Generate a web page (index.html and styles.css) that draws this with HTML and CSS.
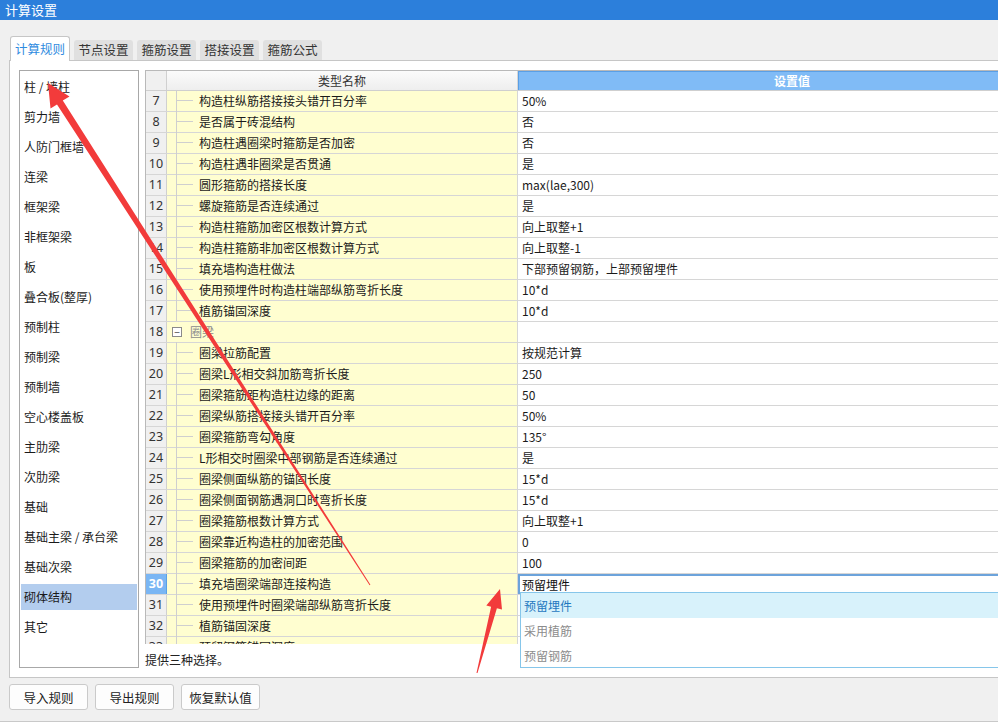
FILE: index.html
```html
<!DOCTYPE html>
<html lang="zh-CN">
<head>
<meta charset="utf-8">
<title>计算设置</title>
<link rel="stylesheet" href="styles.css">
</head>
<body>
<div class="window">
  <div class="titlebar">计算设置</div>
  <div class="main">
    <div class="tabs">
      <div class="tab active">计算规则</div>
      <div class="tab">节点设置</div>
      <div class="tab">箍筋设置</div>
      <div class="tab">搭接设置</div>
      <div class="tab">箍筋公式</div>
    </div>
    <div class="panel">
      <ul class="cat-list">
        <li>柱 / 墙柱</li>
        <li>剪力墙</li>
        <li>人防门框墙</li>
        <li>连梁</li>
        <li>框架梁</li>
        <li>非框架梁</li>
        <li>板</li>
        <li>叠合板(整厚)</li>
        <li>预制柱</li>
        <li>预制梁</li>
        <li>预制墙</li>
        <li>空心楼盖板</li>
        <li>主肋梁</li>
        <li>次肋梁</li>
        <li>基础</li>
        <li>基础主梁 / 承台梁</li>
        <li>基础次梁</li>
        <li class="selected">砌体结构</li>
        <li>其它</li>
      </ul>
      <div class="right">
        <div class="grid">
          <div class="row head">
            <div class="num"></div>
            <div class="name">类型名称</div>
            <div class="val">设置值</div>
          </div>
          <div class="row"><div class="num">7</div><div class="name"><span class="branch"></span>构造柱纵筋搭接接头错开百分率</div><div class="val">50%</div></div>
          <div class="row"><div class="num">8</div><div class="name"><span class="branch"></span>是否属于砖混结构</div><div class="val">否</div></div>
          <div class="row"><div class="num">9</div><div class="name"><span class="branch"></span>构造柱遇圈梁时箍筋是否加密</div><div class="val">否</div></div>
          <div class="row"><div class="num">10</div><div class="name"><span class="branch"></span>构造柱遇非圈梁是否贯通</div><div class="val">是</div></div>
          <div class="row"><div class="num">11</div><div class="name"><span class="branch"></span>圆形箍筋的搭接长度</div><div class="val">max(lae,300)</div></div>
          <div class="row"><div class="num">12</div><div class="name"><span class="branch"></span>螺旋箍筋是否连续通过</div><div class="val">是</div></div>
          <div class="row"><div class="num">13</div><div class="name"><span class="branch"></span>构造柱箍筋加密区根数计算方式</div><div class="val">向上取整+1</div></div>
          <div class="row"><div class="num">14</div><div class="name"><span class="branch"></span>构造柱箍筋非加密区根数计算方式</div><div class="val">向上取整-1</div></div>
          <div class="row"><div class="num">15</div><div class="name"><span class="branch"></span>填充墙构造柱做法</div><div class="val">下部预留钢筋，上部预留埋件</div></div>
          <div class="row"><div class="num">16</div><div class="name"><span class="branch"></span>使用预埋件时构造柱端部纵筋弯折长度</div><div class="val">10*d</div></div>
          <div class="row"><div class="num">17</div><div class="name"><span class="branch last"></span>植筋锚固深度</div><div class="val">10*d</div></div>
          <div class="row"><div class="num">18</div><div class="name group"><span class="toggle">−</span>圈梁</div><div class="val"></div></div>
          <div class="row"><div class="num">19</div><div class="name"><span class="branch"></span>圈梁拉筋配置</div><div class="val">按规范计算</div></div>
          <div class="row"><div class="num">20</div><div class="name"><span class="branch"></span>圈梁L形相交斜加筋弯折长度</div><div class="val">250</div></div>
          <div class="row"><div class="num">21</div><div class="name"><span class="branch"></span>圈梁箍筋距构造柱边缘的距离</div><div class="val">50</div></div>
          <div class="row"><div class="num">22</div><div class="name"><span class="branch"></span>圈梁纵筋搭接接头错开百分率</div><div class="val">50%</div></div>
          <div class="row"><div class="num">23</div><div class="name"><span class="branch"></span>圈梁箍筋弯勾角度</div><div class="val">135°</div></div>
          <div class="row"><div class="num">24</div><div class="name"><span class="branch"></span>L形相交时圈梁中部钢筋是否连续通过</div><div class="val">是</div></div>
          <div class="row"><div class="num">25</div><div class="name"><span class="branch"></span>圈梁侧面纵筋的锚固长度</div><div class="val">15*d</div></div>
          <div class="row"><div class="num">26</div><div class="name"><span class="branch"></span>圈梁侧面钢筋遇洞口时弯折长度</div><div class="val">15*d</div></div>
          <div class="row"><div class="num">27</div><div class="name"><span class="branch"></span>圈梁箍筋根数计算方式</div><div class="val">向上取整+1</div></div>
          <div class="row"><div class="num">28</div><div class="name"><span class="branch"></span>圈梁靠近构造柱的加密范围</div><div class="val">0</div></div>
          <div class="row"><div class="num">29</div><div class="name"><span class="branch"></span>圈梁箍筋的加密间距</div><div class="val">100</div></div>
          <div class="row current"><div class="num">30</div><div class="name"><span class="branch"></span>填充墙圈梁端部连接构造</div><div class="val editing">预留埋件</div></div>
          <div class="row"><div class="num">31</div><div class="name"><span class="branch"></span>使用预埋件时圈梁端部纵筋弯折长度</div><div class="val"></div></div>
          <div class="row"><div class="num">32</div><div class="name"><span class="branch"></span>植筋锚固深度</div><div class="val"></div></div>
          <div class="row"><div class="num">33</div><div class="name"><span class="branch"></span>预留钢筋锚固深度</div><div class="val"></div></div>
        </div>
        <div class="desc">提供三种选择。</div>
        <ul class="dropdown">
          <li class="hover">预留埋件</li>
          <li>采用植筋</li>
          <li>预留钢筋</li>
        </ul>
      </div>
    </div>
    <div class="buttons">
      <button class="btn">导入规则</button>
      <button class="btn">导出规则</button>
      <button class="btn">恢复默认值</button>
    </div>
  </div>
  <svg class="arrows" width="998" height="722" viewBox="0 0 998 722">
    <polygon points="48,83 69.5,96.5 62.8,100.6 370.4,584.7 369.6,585.3 57,104.4 50.5,108.5" fill="#f23b3b"/>
    <polygon points="500,589 502,609.4 496.9,608.2 477.5,673.1 476.5,672.9 491.1,606.7 486.3,605.4" fill="#f23b3b"/>
  </svg>
</div>
</body>
</html>
```
FILE: styles.css
```css
* { box-sizing: border-box; }
html, body { margin: 0; padding: 0; }
body {
  width: 998px;
  height: 722px;
  overflow: hidden;
  font-family: "Noto Sans CJK SC", "Noto Sans", sans-serif;
  font-size: 12px;
  color: #1a1a1a;
  background: #f0f0f0;
}
.window {
  position: relative;
  width: 998px;
  height: 722px;
  overflow: hidden;
}
.titlebar {
  height: 20px;
  line-height: 19px;
  padding-left: 5px;
  background: #2c7fdb;
  color: #ffffff;
  font-size: 13px;
}
.main {
  height: 702px;
  background: #f0f0f0;
  border-bottom: 1px solid #c9c9c9;
}
.tabs {
  display: flex;
  align-items: flex-end;
  gap: 4px;
  padding: 16px 0 0 10px;
  height: 40px;
  position: relative;
  z-index: 2;
}
.tab {
  height: 20px;
  line-height: 20px;
  width: 59px;
  flex: none;
  white-space: nowrap;
  text-align: center;
  background: #e0e0e0;
  color: #333333;
  border-radius: 3px 3px 0 0;
  font-size: 12.5px;
}
.tab.active {
  height: 25px;
  line-height: 24px;
  width: 60px;
  margin-bottom: -1px;
  background: #ffffff;
  border: 1px solid #c6c6c6;
  border-bottom: none;
  color: #2f8be0;
}
.panel {
  display: flex;
  margin-left: 9px;
  width: 1058px;
  height: 618px;
  background: #ffffff;
  border: 1px solid #c6c6c6;
  padding: 9px 0 0 9px;
}
.cat-list {
  list-style: none;
  margin: 0;
  padding: 1px 0 0 0;
  width: 120px;
  height: 598px;
  border: 1px solid #a8a8a8;
  background: #ffffff;
  flex: none;
  display: flex;
  flex-direction: column;
}
.cat-list li {
  height: 26px;
  flex: none;
  line-height: 26px;
  margin: 2px 1px;
  padding-left: 3px;
  white-space: nowrap;
  color: #1a1a1a;
}
.cat-list li.selected { background: #b3cdee; }
.right {
  position: relative;
  flex: 1;
  margin-left: 6px;
  display: flex;
  flex-direction: column;
}
.grid {
  height: 574px;
  overflow: hidden;
  border-top: 1px solid #b9b9b9;
  border-left: 1px solid #b9b9b9;
}
.row {
  display: flex;
  height: 21px;
  border-bottom: 1px solid #d6d6d6;
}
.row.head { height: 20px; border-bottom: 1px solid #cfcfcf; }
.num {
  width: 21px;
  flex: none;
  background: #f0f0f0;
  border-right: 1px solid #d0d0d0;
  text-align: center;
  line-height: 20px;
  color: #333333;
  font-family: "Noto Sans", "Noto Sans CJK SC", sans-serif;
  font-size: 12.5px;
}
.name {
  width: 351px;
  flex: none;
  background: #fffed0;
  border-right: 1px solid #d6d6d6;
  line-height: 20px;
  padding-left: 9px;
  display: flex;
  align-items: center;
  white-space: nowrap;
}
.val {
  flex: 1;
  background: #ffffff;
  line-height: 20px;
  padding-left: 4px;
  white-space: nowrap;
}
.head .num { background: #f0f0f0; }
.head .name {
  justify-content: center;
  background: linear-gradient(#fbfbfb, #eeeeee);
  color: #333333;
  padding-left: 0;
}
.head .val {
  background: #80bbf6;
  border: 1px solid #5a9fe6;
  border-bottom: none;
  color: #ffffff;
  text-align: center;
  padding: 0;
  line-height: 18px;
  font-weight: bold;
}
.branch {
  display: inline-block;
  flex: none;
  width: 17px;
  height: 21px;
  margin-right: 6px;
  align-self: flex-start;
  margin-top: -1px;
  border-left: 1px solid #cfcfcf;
  background: linear-gradient(#cfcfcf, #cfcfcf) no-repeat 0 50% / 100% 1px;
}
.group { color: #8c8c8c; padding-left: 5px; }
.toggle {
  display: inline-block;
  width: 10px;
  height: 10px;
  border: 1px solid #8a8a8a;
  line-height: 7px;
  font-size: 10px;
  text-align: center;
  color: #444444;
  margin-right: 8px;
  background: #ffffff;
}
.current .num {
  background: #7ab6f4;
  color: #ffffff;
  font-weight: bold;
  border-right-color: #5a9fe6;
}
.val.editing {
  border-top: 2px solid #6ca3db;
  border-left: 2px solid #6ca3db;
  line-height: 17px;
  padding-left: 2px;
  color: #111111;
}
.desc {
  flex: 1;
  line-height: 31px;
  padding-left: 0;
  color: #222222;
  background: #ffffff;
}
.dropdown {
  position: absolute;
  left: 375px;
  top: 522px;
  width: 600px;
  height: 76px;
  margin: 0;
  padding: 0;
  list-style: none;
  background: #ffffff;
  border: 1px solid #86c6ea;
  z-index: 3;
}
.dropdown li {
  height: 25px;
  line-height: 25px;
  padding-left: 3px;
  color: #8c8c8c;
}
.dropdown li.hover {
  background: #d8f2fb;
  color: #1f78c0;
}
.buttons {
  display: flex;
  gap: 7px;
  padding: 6px 0 0 9px;
}
.btn {
  width: 79px;
  height: 26px;
  margin: 0;
  padding: 0;
  background: #fdfdfd;
  border: 1px solid #cacaca;
  border-radius: 3px;
  font-family: "Noto Sans CJK SC", "Noto Sans", sans-serif;
  font-size: 12.5px;
  color: #222222;
}
.arrows {
  position: absolute;
  left: 0;
  top: 0;
  pointer-events: none;
  z-index: 10;
}
```
